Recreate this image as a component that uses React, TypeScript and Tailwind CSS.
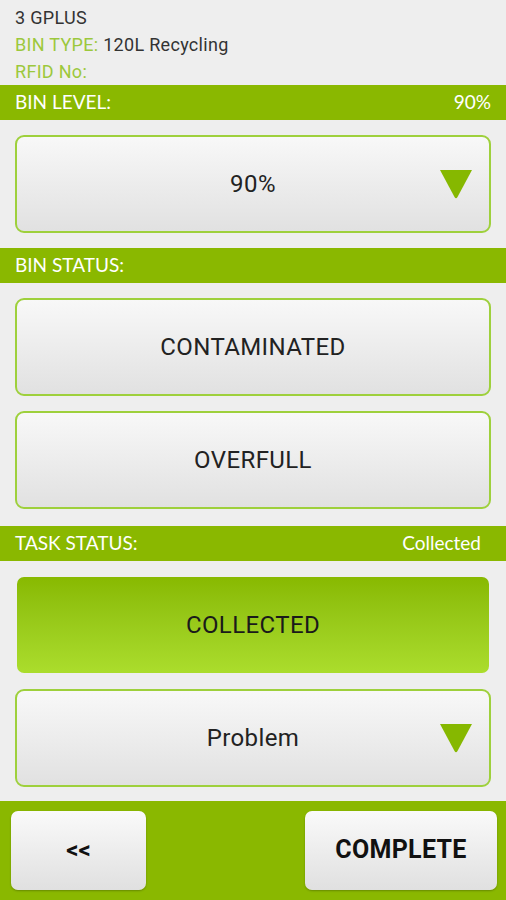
import type { ReactNode } from "react";

const HEAD = { fontFamily: "Lato, 'Open Sans', sans-serif" };
const BODY = { fontFamily: "Roboto, 'Liberation Sans', sans-serif" };

function Bar({ label, value, end = "pr-[15px]" }: { label: string; value?: string; end?: string }) {
    return (
        <div className={`flex h-[35px] items-center justify-between bg-[#8ab800] pl-[15px] ${end} text-[19px] text-white`} style={HEAD}>
            <span>{label}</span>
            {value && <span>{value}</span>}
        </div>
    );
}

function Arrow() {
    return (
        <svg width="34" height="30" viewBox="0 0 34 30" className="absolute right-[16px] top-1/2 -translate-y-1/2">
            <path d="M1 1 H33 L18.5 28 Q17 30.5 15.5 28 Z" fill="#86b800" />
        </svg>
    );
}

function Box({ children, arrow }: { children: ReactNode; arrow?: boolean }) {
    return (
        <div className="relative mx-[15px] flex h-[98px] items-center justify-center rounded-[9px] border-2 border-[#9ed03c] bg-gradient-to-b from-[#f8f8f8] to-[#e1e1e1] text-[24px] tracking-[0.4px] text-[#222]" style={BODY}>
            {children}
            {arrow && <Arrow />}
        </div>
    );
}

export default function App() {
    return (
        <div className="flex h-[900px] w-[506px] flex-col bg-[#eeeeee]" style={BODY}>
            <div className="flex h-[85px] flex-col px-[15px] pt-[4px] text-[18px] leading-[27px] tracking-[0.3px] text-[#333]">
                <span>3 GPLUS</span>
                <span>
                    <span className="text-[#9cc83c]">BIN TYPE: </span>120L Recycling
                </span>
                <span className="text-[#9cc83c]">RFID No:</span>
            </div>

            <Bar label="BIN LEVEL:" value="90%" />
            <div className="flex flex-col gap-[15px] py-[15px]">
                <Box arrow>90%</Box>
            </div>

            <Bar label="BIN STATUS:" />
            <div className="flex flex-col gap-[15px] py-[15px]">
                <Box>CONTAMINATED</Box>
                <Box>OVERFULL</Box>
            </div>

            <div className="mt-[2px]">
                <Bar label="TASK STATUS:" value="Collected" end="pr-[25px]" />
            </div>
            <div className="flex flex-col gap-[16px] pb-[14px] pt-[16px]">
                <div className="mx-[17px] flex h-[96px] items-center justify-center rounded-[7px] bg-gradient-to-b from-[#88b900] to-[#abdd2c] text-[24px] tracking-[0.4px] text-[#1a1a1a]">
                    COLLECTED
                </div>
                <Box arrow>Problem</Box>
            </div>

            <div className="flex flex-1 items-center justify-between bg-[#8ab800] px-[11px] pb-[1px]">
                <button className="flex h-[79px] w-[135px] items-center justify-center rounded-[7px] bg-gradient-to-b from-[#fafafa] to-[#e0e0e0] text-[24px] font-bold text-[#111] shadow-[0_1px_2px_rgba(0,0,0,0.25)]">
                    &lt;&lt;
                </button>
                <button className="mr-[-2px] flex h-[79px] w-[192px] items-center justify-center rounded-[7px] bg-gradient-to-b from-[#fafafa] to-[#e0e0e0] text-[25px] font-bold tracking-[0.3px] text-[#111] shadow-[0_1px_2px_rgba(0,0,0,0.25)]">
                    COMPLETE
                </button>
            </div>
        </div>
    );
}
